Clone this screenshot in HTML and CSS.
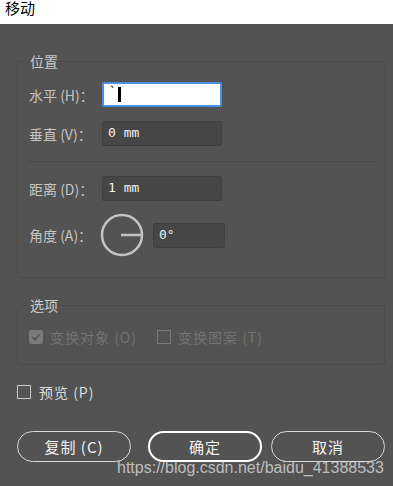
FILE: index.html
```html
<!DOCTYPE html>
<html>
<head>
<meta charset="utf-8">
<title>移动</title>
<link rel="stylesheet" href="styles.css">
</head>
<body>
<div class="titlebar">移动</div>
<div class="dialog">
	<fieldset class="group pos">
		<legend>位置</legend>
		<div class="row first">
			<span class="label">水平 (H)：</span>
			<div class="field active"><span class="tick">`</span><span class="caret"></span></div>
		</div>
		<div class="row">
			<span class="label">垂直 (V)：</span>
			<div class="field">0 mm</div>
		</div>
		<div class="divider"></div>
		<div class="row">
			<span class="label">距离 (D)：</span>
			<div class="field">1 mm</div>
		</div>
		<div class="row angle">
			<span class="label">角度 (A)：</span>
			<svg class="dial" width="46" height="46" viewBox="0 0 46 46">
				<circle cx="23" cy="23" r="20" fill="none" stroke="#c4c4c4" stroke-width="2.5"/>
				<line x1="22" y1="23" x2="42" y2="23" stroke="#c4c4c4" stroke-width="2.5"/>
			</svg>
			<div class="field small">0°</div>
		</div>
	</fieldset>

	<fieldset class="group opts">
		<legend>选项</legend>
		<div class="checks">
			<span class="check disabled"><span class="box on">
				<svg width="14" height="14" viewBox="0 0 14 14"><path d="M3 7.2 L6 10 L11 4" fill="none" stroke="#595959" stroke-width="2.2"/></svg>
			</span>变换对象 (O)</span>
			<span class="check disabled"><span class="box"></span>变换图案 (T)</span>
		</div>
	</fieldset>

	<div class="preview check"><span class="box"></span>预览 (P)</div>

	<div class="buttons">
		<button class="btn">复制 (C)</button>
		<button class="btn ok">确定</button>
		<button class="btn">取消</button>
	</div>
	<div class="watermark">https://blog.csdn.net/baidu_41388533</div>
</div>
</body>
</html>
```

FILE: styles.css
```css
body {
	margin: 0;
	background-color: #535353;
	font-family: "Noto Sans CJK SC", sans-serif;
	color: #c8c8c8;
	width: 393px;
	height: 486px;
	overflow: hidden;
}
.titlebar {
	background-color: #fff;
	color: #000;
	height: 24px;
	font-size: 15px;
	line-height: 15px;
	padding-left: 5px;
}
.dialog {
	display: flow-root;
	position: relative;
	padding: 0 8px 0 17px;
	height: 462px;
}
.group {
	margin: 0;
	border: 1px solid #4b4b4b;
	border-radius: 3px;
	padding: 0 10px 0 11px;
}
.group legend {
	font-size: 14px;
	line-height: 18px;
	padding: 0 1px;
	color: #cacaca;
}
.pos {
	margin-top: 28px;
	height: 224px;
}
.row {
	display: flex;
	align-items: center;
	height: 25px;
	margin-top: 14px;
}
.row.first {
	margin-top: 12px;
}
.label {
	width: 73px;
	font-size: 14px;
	color: #c4c4c4;
	white-space: nowrap;
}
.field {
	box-sizing: border-box;
	width: 120px;
	height: 25px;
	background-color: #464646;
	border: 1px solid #3f3f3f;
	border-radius: 2px;
	color: #f0f0f0;
	font-family: "DejaVu Sans Mono", monospace;
	font-size: 13px;
	line-height: 22px;
	padding-left: 5px;
}
.field.active {
	background-color: #fff;
	border: 2px solid #4a90e2;
	display: flex;
	align-items: center;
	color: #000;
}
.tick {
	font-size: 12px;
	line-height: 12px;
	align-self: flex-start;
	margin-top: 2px;
}
.caret {
	display: inline-block;
	width: 3px;
	height: 15px;
	background-color: #000;
	margin-left: 2px;
}
.divider {
	height: 1px;
	background-color: #4a4a4a;
	margin: 15px 0 13px -1px;
	width: 347px;
}
.row.angle {
	height: 46px;
	margin-top: 11px;
}
.dial {
	margin-left: -3px;
}
.field.small {
	width: 72px;
	height: 25px;
	margin-left: 8px;
}
.opts {
	margin-top: 18px;
	height: 67px;
}
.checks {
	display: flex;
	align-items: center;
	gap: 20px;
	margin-top: 13px;
}
.check {
	display: flex;
	align-items: center;
	font-size: 14px;
	letter-spacing: 1px;
}
.disabled {
	color: #727272;
}
.box {
	box-sizing: border-box;
	width: 14px;
	height: 14px;
	border: 1px solid #c8c8c8;
	margin-right: 7px;
	display: inline-flex;
	align-items: center;
	justify-content: center;
}
.disabled .box {
	border-color: #7a7a7a;
}
.disabled .box.on {
	background-color: #7a7a7a;
	border-radius: 2px;
}
.preview {
	margin-top: 17px;
	color: #dcdcdc;
}
.preview .box {
	margin-right: 8px;
}
.buttons {
	display: flex;
	justify-content: space-between;
	margin-top: 29px;
	width: 368px;
}
.btn {
	width: 114px;
	height: 31px;
	border: 1.5px solid #d8d8d8;
	border-radius: 16px;
	background-color: transparent;
	color: #f4f4f4;
	font-family: "Noto Sans CJK SC", sans-serif;
	font-size: 15px;
	letter-spacing: 1px;
}
.btn.ok {
	border: 2px solid #fff;
	margin-left: 8px;
}
.watermark {
	position: absolute;
	left: 117px;
	top: 435px;
	font-family: "Liberation Sans", Arial, sans-serif;
	font-size: 16px;
	color: rgba(225, 225, 225, 0.75);
	white-space: nowrap;
}
```
